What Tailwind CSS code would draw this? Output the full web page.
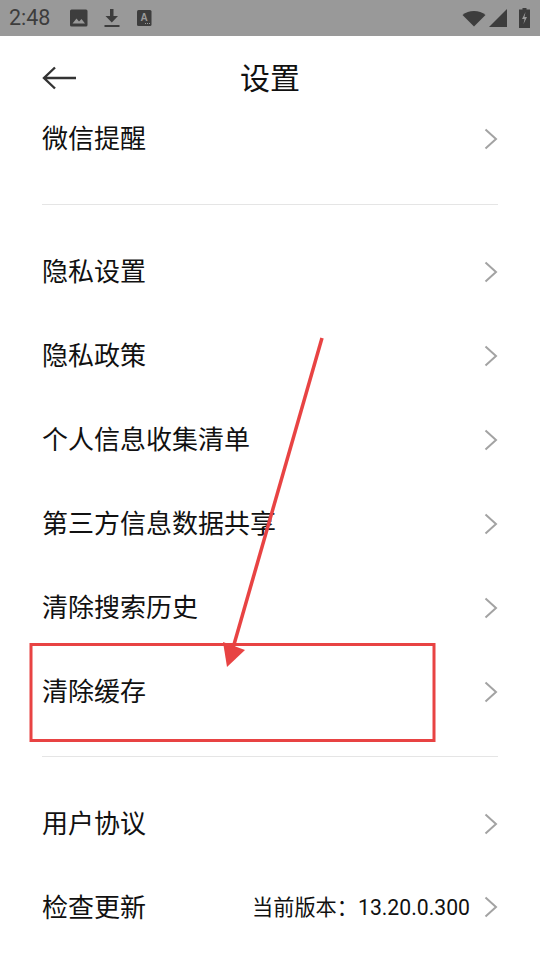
<!DOCTYPE html>
<html lang="zh-CN">
<head>
<meta charset="utf-8">
<script src="https://cdn.jsdelivr.net/npm/@tailwindcss/browser@4"></script>
</head>
<body class="bg-white">
<div class="relative w-[540px] h-[960px] overflow-hidden bg-white text-[#111111] font-['Liberation_Sans','Noto_Sans_CJK_SC',sans-serif]">
  <div class="h-[36px] bg-[#999999] flex items-center pl-[9px] pr-[10px] text-[#3d3d3d]">
    <span class="text-[21.500px] font-['Roboto',sans-serif] w-[52px]">2:48</span>
    <svg class="w-[18px] h-[18px] ml-[9px]" viewBox="0 0 18 18"><rect x="0" y="0.5" width="17.5" height="17" rx="1.5" fill="#3d3d3d"/><path d="M2.5 14.5 L6.5 9.5 L9 12.5 L11.5 10 L15 14.5Z" fill="#999999"/></svg>
    <svg class="w-[16px] h-[20px] ml-[16px]" viewBox="0 0 16 20"><path d="M6 1h3.5v7H14l-6.2 6.5L1.5 8H6z" fill="#3d3d3d"/><rect x="0.5" y="17" width="15" height="2" fill="#3d3d3d"/></svg>
    <svg class="w-[15px] h-[16px] ml-[17px]" viewBox="0 0 15 16"><rect width="14.5" height="16" rx="1.5" fill="#3d3d3d"/><text x="7" y="10.5" text-anchor="middle" font-size="10" font-weight="700" font-family="Liberation Sans" fill="#999999">A</text><path d="M8 13.5h1M10 13.5h1M12 13.5h1" stroke="#999999" stroke-width="1"/></svg>
    <div class="ml-auto flex items-center">
      <svg class="w-[24px] h-[17px]" viewBox="0 0 24 17"><path d="M0.5 5 C6.5 -0.5 17.5 -0.5 23.5 5 L12 16.5Z" fill="#3d3d3d"/></svg>
      <svg class="w-[18px] h-[18px] ml-[3px]" viewBox="0 0 18 18"><path d="M0 18 L18 0 V18Z" fill="#3d3d3d"/></svg>
      <svg class="w-[11px] h-[20px] ml-[12px]" viewBox="0 0 11 20"><path d="M3.5 0h4v1.5H11V20H0V1.500h3.5z" fill="#3d3d3d"/><path d="M6.500 4 L3 11h2.500L4.500 16 L8 9H5.500z" fill="#999999"/></svg>
    </div>
  </div>

  <header class="relative h-[61px] pt-[24px] flex items-center justify-center">
    <svg class="absolute left-[42px] top-[29px] w-[36px] h-[26px]" viewBox="0 0 36 26"><path d="M34 13H2M13 2.500 2 13l11 10.500" fill="none" stroke="#333333" stroke-width="2.400"/></svg>
    <h1 class="text-[30px] leading-[38px] font-normal text-[#111111]">设置</h1>
  </header>

  <main class="px-[42px]">
    <div class="flex items-center justify-between h-[84px] text-[26px]"><span class="pt-[1px]">微信提醒</span><svg class="w-[14px] h-[22px] -mt-[1px]" viewBox="0 0 14 22"><path d="M1.500 1.500 12 11 1.500 20.500" fill="none" stroke="#a3a3a3" stroke-width="2"/></svg></div>
    <div class="h-px bg-[#e5e5e5] mt-[23px] mb-[25px]"></div>
    <div class="flex items-center justify-between h-[84px] text-[26px]"><span class="pt-[1px]">隐私设置</span><svg class="w-[14px] h-[22px] -mt-[1px]" viewBox="0 0 14 22"><path d="M1.500 1.500 12 11 1.500 20.500" fill="none" stroke="#a3a3a3" stroke-width="2"/></svg></div>
    <div class="flex items-center justify-between h-[84px] text-[26px]"><span class="pt-[1px]">隐私政策</span><svg class="w-[14px] h-[22px] -mt-[1px]" viewBox="0 0 14 22"><path d="M1.500 1.500 12 11 1.500 20.500" fill="none" stroke="#a3a3a3" stroke-width="2"/></svg></div>
    <div class="flex items-center justify-between h-[84px] text-[26px]"><span class="pt-[1px]">个人信息收集清单</span><svg class="w-[14px] h-[22px] -mt-[1px]" viewBox="0 0 14 22"><path d="M1.500 1.500 12 11 1.500 20.500" fill="none" stroke="#a3a3a3" stroke-width="2"/></svg></div>
    <div class="flex items-center justify-between h-[84px] text-[26px]"><span class="pt-[1px]">第三方信息数据共享</span><svg class="w-[14px] h-[22px] -mt-[1px]" viewBox="0 0 14 22"><path d="M1.500 1.500 12 11 1.500 20.500" fill="none" stroke="#a3a3a3" stroke-width="2"/></svg></div>
    <div class="flex items-center justify-between h-[84px] text-[26px]"><span class="pt-[1px]">清除搜索历史</span><svg class="w-[14px] h-[22px] -mt-[1px]" viewBox="0 0 14 22"><path d="M1.500 1.500 12 11 1.500 20.500" fill="none" stroke="#a3a3a3" stroke-width="2"/></svg></div>
    <div class="flex items-center justify-between h-[84px] text-[26px]"><span class="pt-[1px]">清除缓存</span><svg class="w-[14px] h-[22px] -mt-[1px]" viewBox="0 0 14 22"><path d="M1.500 1.500 12 11 1.500 20.500" fill="none" stroke="#a3a3a3" stroke-width="2"/></svg></div>
    <div class="h-px bg-[#e5e5e5] mt-[22px] mb-[25px]"></div>
    <div class="flex items-center justify-between h-[84px] text-[26px]"><span class="pt-[1px]">用户协议</span><svg class="w-[14px] h-[22px] -mt-[1px]" viewBox="0 0 14 22"><path d="M1.500 1.500 12 11 1.500 20.500" fill="none" stroke="#a3a3a3" stroke-width="2"/></svg></div>
    <div class="flex items-center justify-between h-[84px] text-[26px]"><span class="pt-[1px]">检查更新</span><div class="flex items-center"><span class="text-[21.200px] mr-[14px] font-['Roboto','Noto_Sans_CJK_SC',sans-serif]">当前版本：13.20.0.300</span><svg class="w-[14px] h-[22px] -mt-[1px]" viewBox="0 0 14 22"><path d="M1.500 1.500 12 11 1.500 20.500" fill="none" stroke="#a3a3a3" stroke-width="2"/></svg></div></div>
  </main>

  <svg class="absolute left-0 top-0 w-[540px] h-[960px] pointer-events-none" viewBox="0 0 540 960">
    <rect x="31" y="644.500" width="403" height="96" fill="none" stroke="#e84343" stroke-width="3"/>
    <path d="M322 338 L233 648" stroke="#e84343" stroke-width="3.500" fill="none"/>
    <path d="M223 642 L245 650 L227 667Z" fill="#e84343"/>
  </svg>
</div>
</body>
</html>
